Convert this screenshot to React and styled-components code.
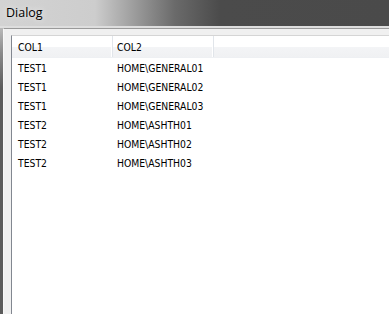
import React from 'react';
import styled, { createGlobalStyle } from 'styled-components';

const GlobalStyle = createGlobalStyle`
  html, body {
    margin: 0;
    padding: 0;
    overflow: hidden;
  }
`;

const Window = styled.div`
  display: flex;
  flex-direction: column;
  width: 389px;
  height: 314px;
  overflow: hidden;
  background: #5c5c5c;
`;

const TitleBar = styled.div`
  display: flex;
  align-items: center;
  height: 26px;
  padding-left: 6px;
  border-bottom: 2px solid #dedede;
  background: linear-gradient(90deg, #d3d3d3 0, #cdcdcd 95px, #6a6a6a 175px, #4b4b4b 220px, #4a4a4a 100%);
`;

const Title = styled.span`
  font-family: "Open Sans", "Noto Sans", sans-serif;
  font-size: 12.5px;
  color: #000;
  margin-top: -1px;
  text-shadow: 0 0 6px rgba(255, 255, 255, 0.8);
`;

const Body = styled.div`
  display: flex;
  flex: 1;
  min-height: 0;
`;

const SideFrame = styled.div`
  width: 3px;
  background: linear-gradient(180deg, #b9b9b9 0, #8a8a8a 25px, #5c5c5c 60px, #5c5c5c 100%);
`;

const Client = styled.div`
  display: flex;
  flex: 1;
  min-width: 0;
  padding: 6px 0 0 7px;
  background: #f0f0f0;
  border-top: 1px solid #9a9a9a;
  border-left: 1px solid #f8f8f8;
`;

const ListView = styled.div`
  flex: 1;
  background: #fff;
  border-top: 1px solid #d5d5d5;
  border-left: 1px solid #828790;
  font-family: "DejaVu Sans Condensed", "DejaVu Sans", sans-serif;
  font-stretch: condensed;
  font-size: 10.3px;
  color: #000;
`;

const Header = styled.div`
  display: flex;
  height: 21px;
  background: linear-gradient(180deg, #ffffff 0, #ffffff 50%, #f3f4f6 51%, #f0f1f3 100%);
  border-bottom: 1px solid #eef0f3;
`;

const HeaderCell = styled.div`
  display: flex;
  align-items: center;
  width: ${p => p.$w ? `${p.$w}px` : 'auto'};
  flex: ${p => p.$w ? 'none' : 1};
  padding-left: ${p => p.$pad}px;
  box-sizing: border-box;
  border-right: ${p => p.$w ? '1px solid #e1e5ea' : 'none'};
  box-shadow: ${p => p.$w ? 'inset -1px 0 0 #ffffff' : 'none'};
`;

const Row = styled.div`
  display: flex;
  align-items: center;
  height: 19px;
`;

const Cell = styled.div`
  width: ${p => p.$w}px;
  padding-left: 6px;
  box-sizing: border-box;
  white-space: nowrap;
`;

const rows = [
  ['TEST1', 'HOME\\GENERAL01'],
  ['TEST1', 'HOME\\GENERAL02'],
  ['TEST1', 'HOME\\GENERAL03'],
  ['TEST2', 'HOME\\ASHTH01'],
  ['TEST2', 'HOME\\ASHTH02'],
  ['TEST2', 'HOME\\ASHTH03'],
];

export default function App() {
  return (
    <>
      <GlobalStyle />
      <Window>
        <TitleBar>
          <Title>Dialog</Title>
        </TitleBar>
        <Body>
          <SideFrame />
          <Client>
            <ListView>
              <Header>
                <HeaderCell $w={101} $pad={6}>COL1</HeaderCell>
                <HeaderCell $w={101} $pad={4}>COL2</HeaderCell>
                <HeaderCell $pad={4} />
              </Header>
              {rows.map((r, i) => (
                <Row key={i}>
                  <Cell $w={99}>{r[0]}</Cell>
                  <Cell $w={101}>{r[1]}</Cell>
                </Row>
              ))}
            </ListView>
          </Client>
        </Body>
      </Window>
    </>
  );
}
